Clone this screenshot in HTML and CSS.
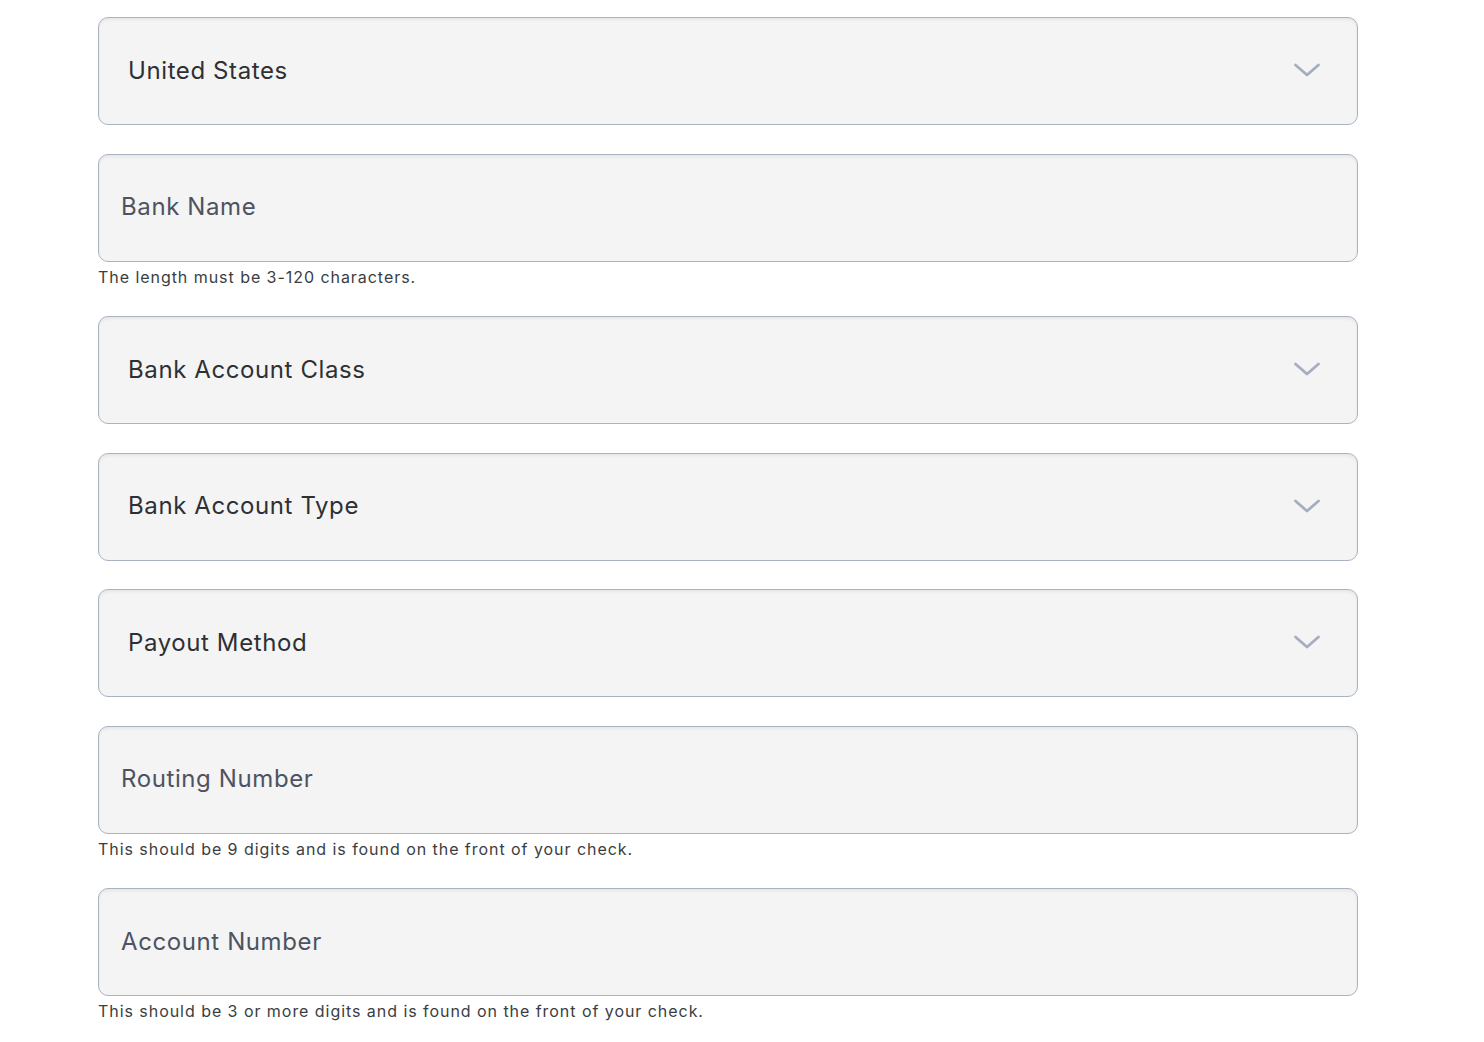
FILE: index.html
```html
<!DOCTYPE html>
<html lang="en">
<head>
<meta charset="utf-8">
<title>Bank details</title>
<link rel="stylesheet" href="styles.css">
</head>
<body>
<form class="form">
  <div class="field">
    <div class="control select">
      <span class="value">United States</span>
      <svg class="chevron" viewBox="0 0 28 16" width="28" height="16"><path d="M2.5 3 L14 13 L25.5 3" fill="none" stroke="#a5aec0" stroke-width="2.8" stroke-linecap="round" stroke-linejoin="round"/></svg>
    </div>
  </div>
  <div class="field">
    <div class="control input"><span class="placeholder">Bank Name</span></div>
    <p class="help">The length must be 3-120 characters.</p>
  </div>
  <div class="field">
    <div class="control select">
      <span class="value">Bank Account Class</span>
      <svg class="chevron" viewBox="0 0 28 16" width="28" height="16"><path d="M2.5 3 L14 13 L25.5 3" fill="none" stroke="#a5aec0" stroke-width="2.8" stroke-linecap="round" stroke-linejoin="round"/></svg>
    </div>
  </div>
  <div class="field">
    <div class="control select">
      <span class="value">Bank Account Type</span>
      <svg class="chevron" viewBox="0 0 28 16" width="28" height="16"><path d="M2.5 3 L14 13 L25.5 3" fill="none" stroke="#a5aec0" stroke-width="2.8" stroke-linecap="round" stroke-linejoin="round"/></svg>
    </div>
  </div>
  <div class="field">
    <div class="control select">
      <span class="value">Payout Method</span>
      <svg class="chevron" viewBox="0 0 28 16" width="28" height="16"><path d="M2.5 3 L14 13 L25.5 3" fill="none" stroke="#a5aec0" stroke-width="2.8" stroke-linecap="round" stroke-linejoin="round"/></svg>
    </div>
  </div>
  <div class="field">
    <div class="control input"><span class="placeholder">Routing Number</span></div>
    <p class="help">This should be 9 digits and is found on the front of your check.</p>
  </div>
  <div class="field">
    <div class="control input"><span class="placeholder">Account Number</span></div>
    <p class="help">This should be 3 or more digits and is found on the front of your check.</p>
  </div>
</form>
</body>
</html>
```
FILE: styles.css
```css
html, body {
  margin: 0;
  padding: 0;
  background: #ffffff;
}
body {
  font-family: Inter, "Noto Sans", sans-serif;
  color: #2f3237;
}
.form {
  width: 1260px;
  padding: 17px 0 0 98px;
  display: flex;
  flex-direction: column;
  gap: 28.5px;
}
.field {
  display: flex;
  flex-direction: column;
}
.control {
  box-sizing: border-box;
  height: 108px;
  border: 1px solid #a9b3c2;
  border-radius: 10px;
  background: #f4f4f4;
  box-shadow: inset 0 2px 3px rgba(0, 0, 0, 0.06);
  display: flex;
  align-items: center;
}
.select {
  padding: 0 36px 0 29px;
  justify-content: space-between;
}
.input {
  padding: 0 22px;
}
.value {
  font-size: 24px;
  color: #2e3034;
  letter-spacing: 0.6px;
  margin-top: -2px;
}
.placeholder {
  font-size: 24px;
  color: #4d5361;
  letter-spacing: 0.6px;
  margin-top: -2px;
}
.chevron {
  display: block;
  margin-top: -2px;
}
.help {
  margin: 5px 0 0 0;
  font-size: 16px;
  line-height: 21px;
  letter-spacing: 0.95px;
  color: #3a3d42;
}
```
